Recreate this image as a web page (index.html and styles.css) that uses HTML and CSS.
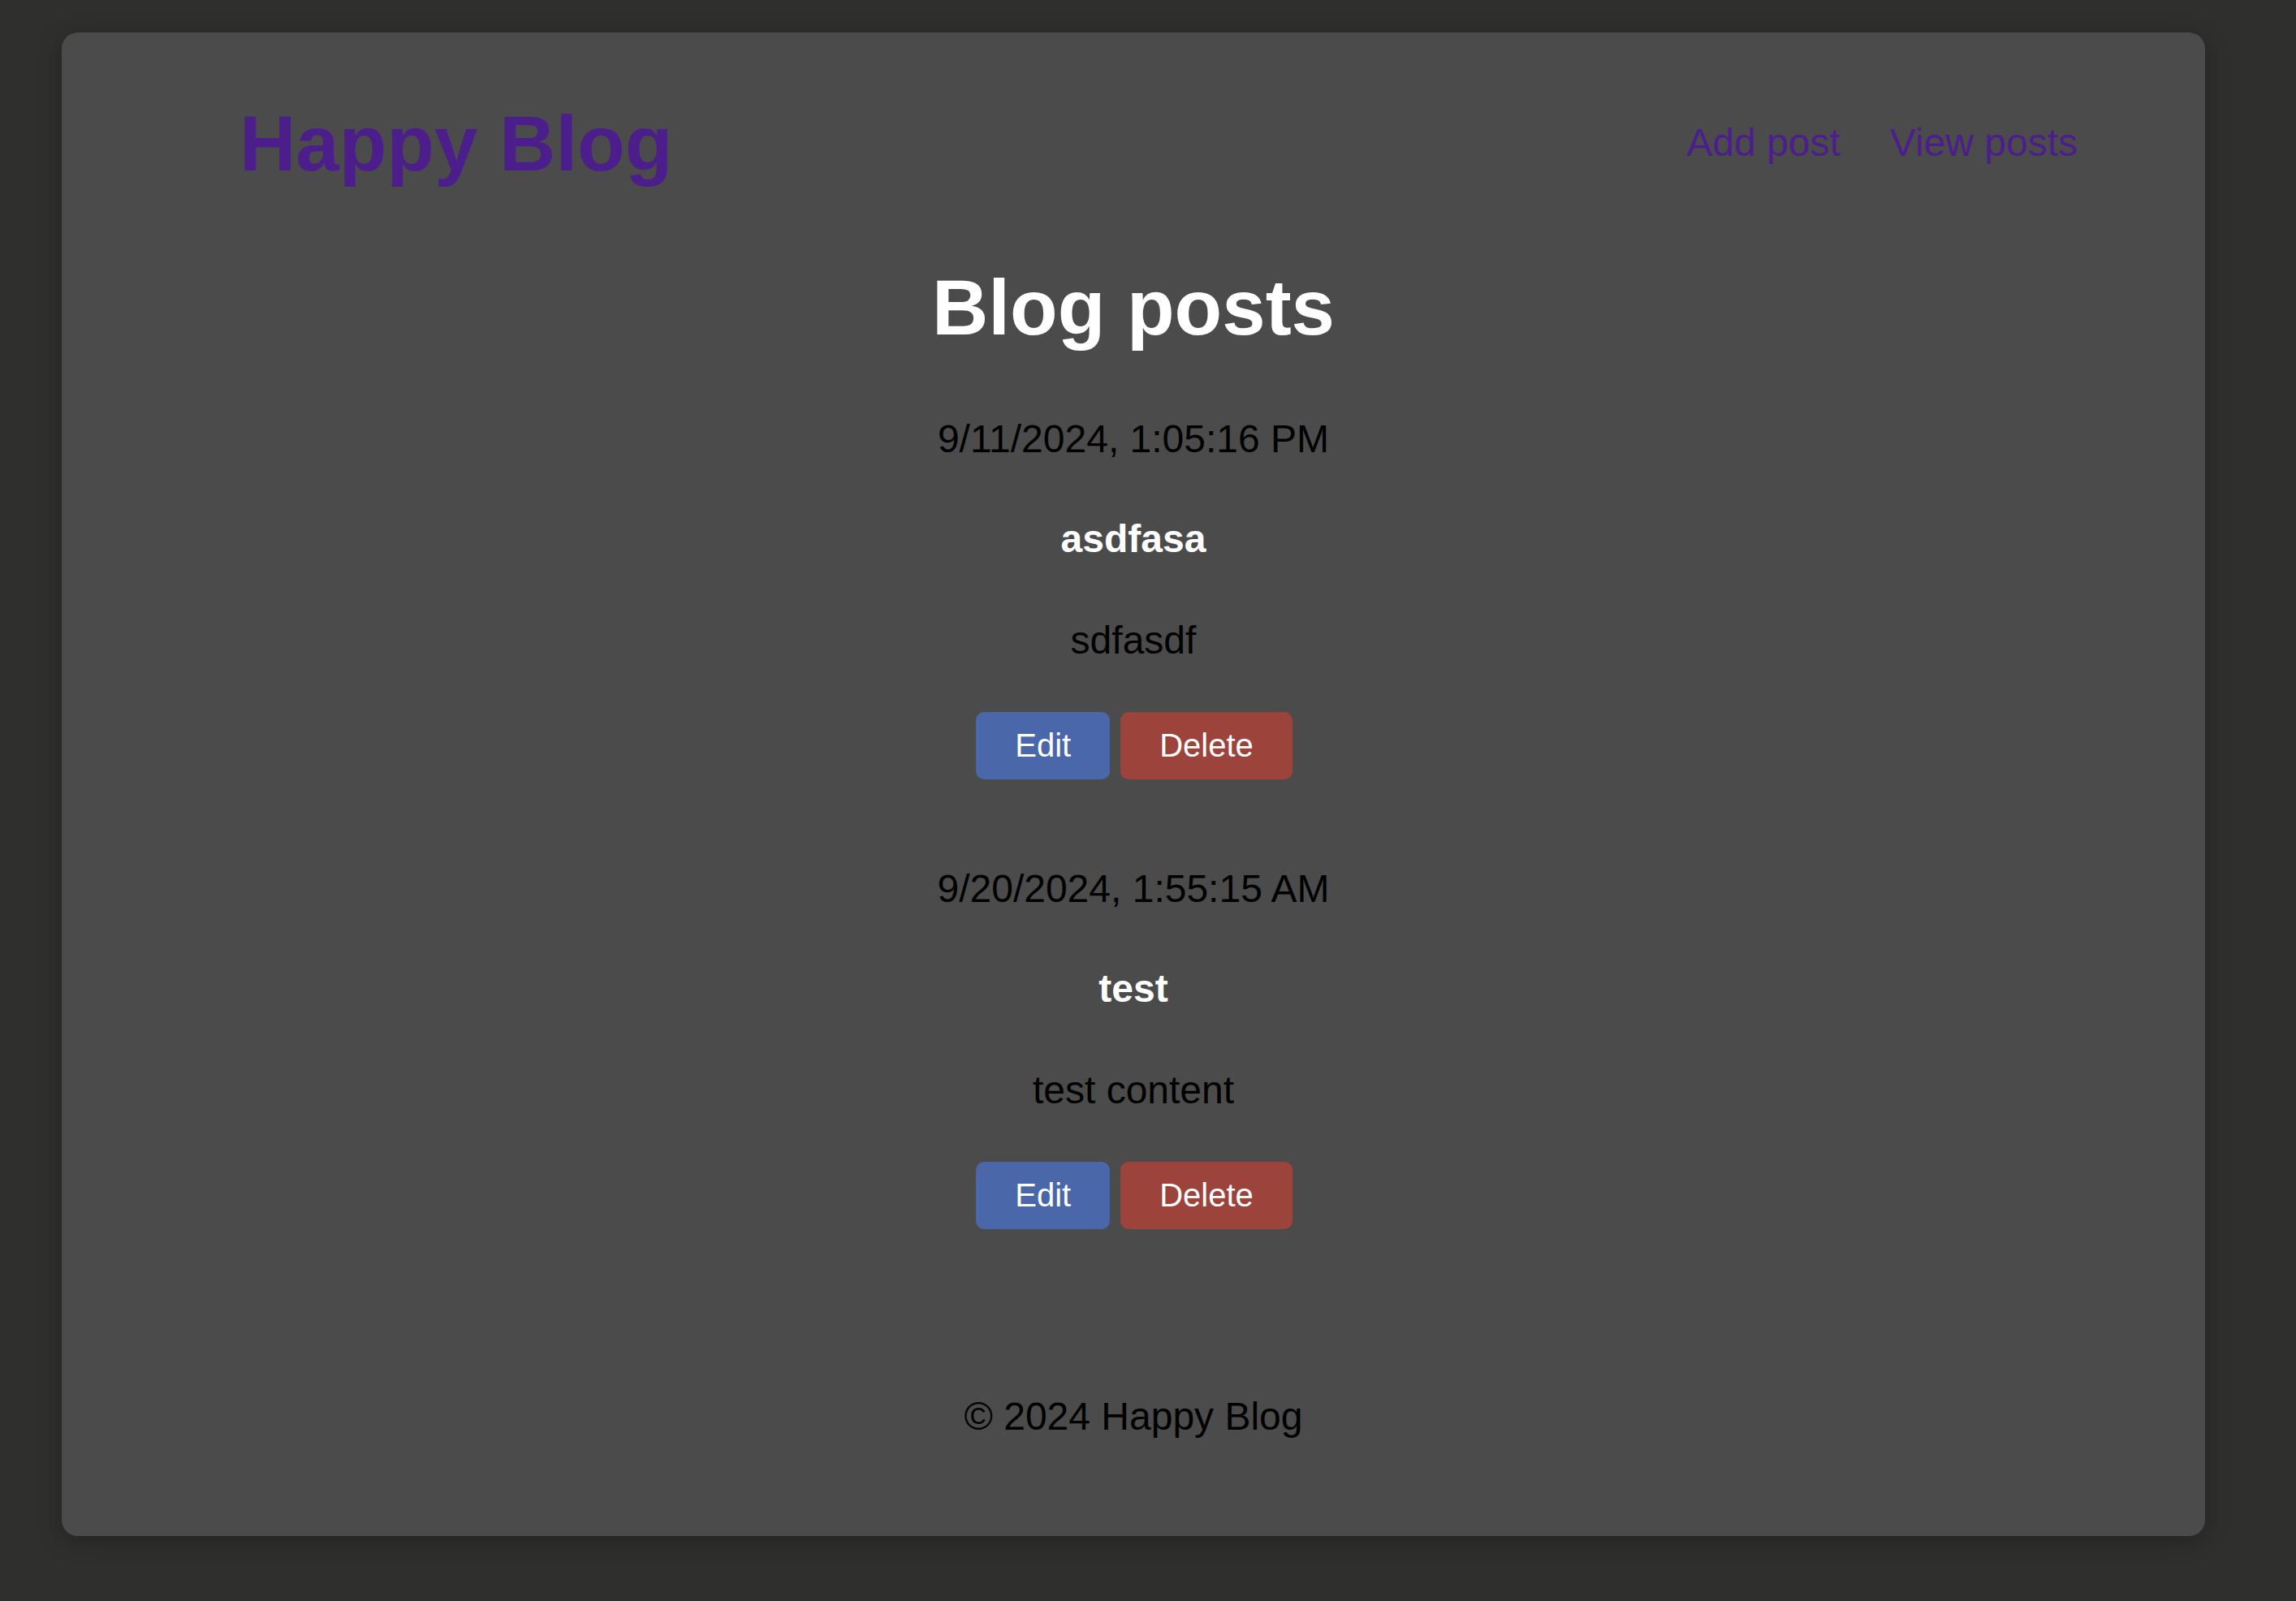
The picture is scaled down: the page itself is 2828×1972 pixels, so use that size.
FILE: index.html
```html
<!DOCTYPE html>
<html lang="en">
<head>
<meta charset="utf-8">
<title>Happy Blog</title>
<link rel="stylesheet" href="styles.css">
</head>
<body>
<div class="container">
  <header class="site-header">
    <a class="logo" href="#">Happy Blog</a>
    <nav class="nav">
      <a href="#">Add post</a>
      <a href="#">View posts</a>
    </nav>
  </header>
  <main class="main">
    <h1 class="page-title">Blog posts</h1>
    <article class="post">
      <p class="post-date">9/11/2024, 1:05:16 PM</p>
      <h3 class="post-title">asdfasa</h3>
      <p class="post-content">sdfasdf</p>
      <div class="actions">
        <button class="btn btn-edit">Edit</button>
        <button class="btn btn-delete">Delete</button>
      </div>
    </article>
    <article class="post">
      <p class="post-date">9/20/2024, 1:55:15 AM</p>
      <h3 class="post-title">test</h3>
      <p class="post-content">test content</p>
      <div class="actions">
        <button class="btn btn-edit">Edit</button>
        <button class="btn btn-delete">Delete</button>
      </div>
    </article>
  </main>
  <footer class="site-footer">© 2024 Happy Blog</footer>
</div>
</body>
</html>
```
FILE: styles.css
```css
html, body {
  margin: 0;
  padding: 0;
}
body {
  background: #2f2f2e;
  font-family: "Liberation Sans", Arial, sans-serif;
  color: #000;
  padding-top: 40px;
  min-height: 1972px;
  box-sizing: border-box;
}
.container {
  margin-left: 76px;
  width: 2640px;
  height: 1852px;
  box-sizing: border-box;
  background: #4b4b4b;
  border-radius: 20px;
  box-shadow: 0 6px 30px rgba(0, 0, 0, 0.25);
  padding-top: 82px;
  display: flex;
  flex-direction: column;
}
.site-header {
  display: flex;
  justify-content: space-between;
  align-items: center;
  padding-left: 219px;
  padding-right: 157px;
}
.logo {
  font-size: 96px;
  font-weight: bold;
  color: #4b1e8b;
  text-decoration: none;
  line-height: 110px;
}
.nav {
  display: flex;
  gap: 61px;
  margin-top: -3px;
}
.nav a {
  font-size: 48px;
  line-height: 55px;
  color: #4b1e8b;
  text-decoration: none;
}
.main {
  text-align: center;
}
.page-title {
  font-size: 96px;
  font-weight: bold;
  color: #fff;
  margin: 92px 0 0;
  line-height: 110px;
}
.post {
  margin-top: 79px;
}
.post + .post {
  margin-top: 107px;
}
.post-date,
.post-title,
.post-content {
  font-size: 48px;
  line-height: 55px;
  margin: 0;
}
.post-title {
  font-weight: bold;
  color: #fff;
  margin-top: 68px;
}
.post-content {
  margin-top: 70px;
}
.actions {
  display: flex;
  justify-content: center;
  gap: 13px;
  margin-top: 61px;
  padding-left: 2px;
}
.btn {
  font-family: "Liberation Sans", Arial, sans-serif;
  font-size: 40px;
  color: #fff;
  border: none;
  border-radius: 10px;
  padding: 0 48px;
  height: 83px;
  line-height: 83px;
  cursor: pointer;
}
.btn-edit {
  background: #4a67aa;
}
.btn-delete {
  background: #9c433c;
}
.site-footer {
  text-align: center;
  font-size: 48px;
  line-height: 55px;
  margin-top: 203px;
}
```
